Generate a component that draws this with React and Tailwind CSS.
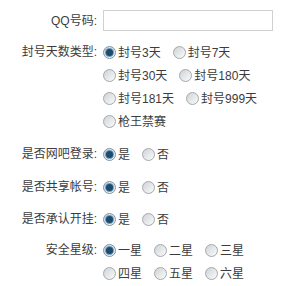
import { useState } from 'react';

const font = { fontFamily: '"Liberation Sans", "Noto Sans CJK SC", sans-serif' };

function Radio({ checked }) {
  return (
    <span
      className={`w-[13px] h-[13px] rounded-full border flex items-center justify-center shrink-0 bg-linear-to-br ${
        checked ? 'border-[#7d95a8] from-[#c9d6e0] to-[#f4f8fb]' : 'border-[#a3a9ae] from-[#cfd3d6] to-[#fbfbfb]'
      }`}
    >
      {checked && (
        <span className="w-[7px] h-[7px] rounded-full bg-[#1d4b6c] shadow-[0_0_0_1px_#6f9bbb]" />
      )}
    </span>
  );
}

function Options({ name, items, value, onChange }) {
  return (
    <div className="w-[170px] flex flex-wrap gap-x-[12px]">
      {items.map((item) => (
        <label
          key={item}
          className="flex items-center gap-[2px] h-[23px] cursor-pointer"
          onClick={() => onChange(name, item)}
        >
          <Radio checked={value === item} />
          <span className="whitespace-nowrap">{item}</span>
        </label>
      ))}
    </div>
  );
}

function Row({ label, className = '', children }) {
  return (
    <div className={`flex items-start ${className}`}>
      <div className="w-[97px] text-right leading-[23px] shrink-0">{label}</div>
      <div className="ml-[6px]">{children}</div>
    </div>
  );
}

export default function App() {
  const [form, setForm] = useState({
    days: '封号3天',
    netbar: '是',
    share: '是',
    cheat: '是',
    level: '一星'
  });

  const set = (k, v) => setForm((f) => ({ ...f, [k]: v }));

  return (
    <div className="w-[289px] h-[286px] bg-white text-[12px] text-[#3c3c3c] pt-[10px]" style={font}>
      <div className="flex items-center">
        <div className="w-[97px] text-right shrink-0">QQ号码:</div>
        <input className="ml-[6px] w-[170px] h-[21px] border border-[#d0d0d0] outline-none px-1" />
      </div>

      <Row label="封号天数类型:" className="mt-[10px]">
        <Options
          name="days"
          items={['封号3天', '封号7天', '封号30天', '封号180天', '封号181天', '封号999天', '枪王禁赛']}
          value={form.days}
          onChange={set}
        />
      </Row>

      <Row label="是否网吧登录:" className="mt-[10px]">
        <Options name="netbar" items={['是', '否']} value={form.netbar} onChange={set} />
      </Row>

      <Row label="是否共享帐号:" className="mt-[10px]">
        <Options name="share" items={['是', '否']} value={form.share} onChange={set} />
      </Row>

      <Row label="是否承认开挂:" className="mt-[9px]">
        <Options name="cheat" items={['是', '否']} value={form.cheat} onChange={set} />
      </Row>

      <Row label="安全星级:" className="mt-[8px]">
        <Options
          name="level"
          items={['一星', '二星', '三星', '四星', '五星', '六星']}
          value={form.level}
          onChange={set}
        />
      </Row>
    </div>
  );
}
